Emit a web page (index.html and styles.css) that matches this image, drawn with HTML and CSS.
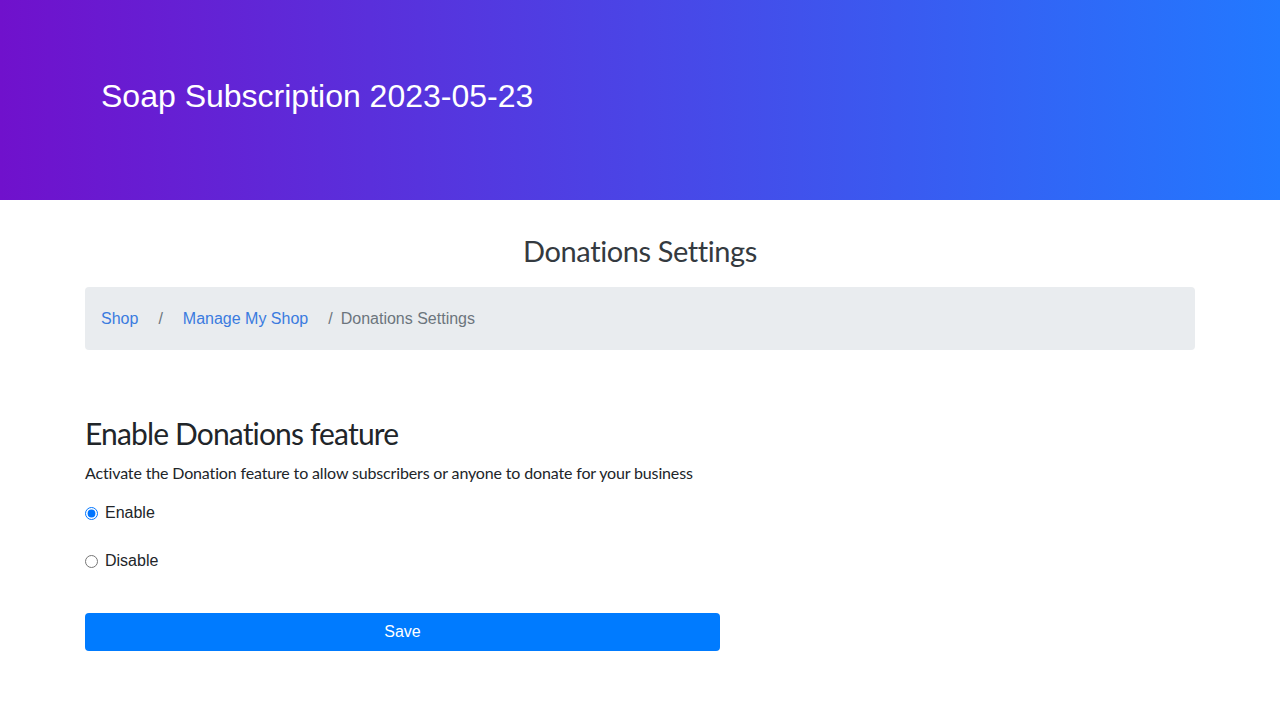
FILE: index.html
```html
<!DOCTYPE html>
<html>
<head>
<meta charset="utf-8">
<link rel="stylesheet" href="styles.css">
</head>
<body>
<header class="hero">
  <div class="hero-inner">
    <h1 class="hero-title">Soap Subscription 2023-05-23</h1>
  </div>
</header>
<main class="page">
  <div class="container">
    <h2 class="page-title">Donations Settings</h2>
    <nav class="breadcrumb">
      <a class="crumb-link first" href="#">Shop</a>
      <span class="sep">/</span>
      <a class="crumb-link" href="#">Manage My Shop</a>
      <span class="sep">/</span>
      <span class="crumb-active">Donations Settings</span>
    </nav>
    <section class="feature">
      <h3 class="feature-title">Enable Donations feature</h3>
      <p class="feature-desc">Activate the Donation feature to allow subscribers or anyone to donate for your business</p>
      <label class="radio-row"><input type="radio" name="don" checked> <span>Enable</span></label>
      <label class="radio-row"><input type="radio" name="don"> <span>Disable</span></label>
      <button class="save-btn" type="button">Save</button>
    </section>
  </div>
</main>
<footer class="footer"></footer>
</body>
</html>
```
FILE: styles.css
```css
* { box-sizing: border-box; }
html, body { margin: 0; padding: 0; }
body {
  font-family: "Liberation Sans", Arial, sans-serif;
  font-size: 16px;
  color: #212529;
  background: #fff;
}
.hero {
  height: 200px;
  background: linear-gradient(90deg, #7011cc 0%, #4a45e6 50%, #2279ff 100%);
  display: flex;
  align-items: center;
}
.hero-inner { padding-left: 101px; padding-bottom: 8px; }
.hero-title {
  margin: 0;
  font-weight: 400;
  font-size: 32px;
  line-height: 1.2;
  color: #fff;
}
.page { height: 515px; }
.container { width: 1110px; margin: 0 auto; }
.page-title {
  margin: 33px 0 18px;
  text-align: center;
  font-family: Lato, sans-serif;
  font-weight: 400;
  font-size: 29px;
  line-height: 36px;
  color: #343a40;
  letter-spacing: -0.4px;
}
.breadcrumb {
  display: flex;
  align-items: center;
  background: #e9ecef;
  border-radius: 4px;
  height: 63px;
  padding: 0 16px;
  line-height: 24px;
}
.crumb-link { color: #3a7bdf; text-decoration: none; padding: 0 12px; }
.crumb-link.first { padding-left: 0; }
.sep { color: #6c757d; padding: 0 8px; }
.crumb-active { color: #6c757d; }
.feature { width: 635px; padding-top: 65px; }
.feature-title {
  margin: 0 0 10px;
  font-family: Lato, sans-serif;
  font-weight: 400;
  font-size: 30px;
  line-height: 36px;
  color: #212529;
  letter-spacing: -0.85px;
}
.feature-desc {
  margin: 0 0 16px;
  font-family: Lato, sans-serif;
  font-size: 16px;
  line-height: 24px;
  letter-spacing: -0.15px;
}
.radio-row {
  display: flex;
  align-items: center;
  height: 24px;
  margin-bottom: 24px;
}
.radio-row input { margin: 0 7px 0 0; width: 13px; height: 13px; }
.save-btn {
  display: block;
  width: 635px;
  height: 38px;
  margin-top: 40px;
  border: 0;
  border-radius: 4px;
  background: #007bff;
  color: #fff;
  font-family: "Liberation Sans", Arial, sans-serif;
  font-size: 16px;
}
.footer { height: 5px; background: #f5f6f7; }
```
